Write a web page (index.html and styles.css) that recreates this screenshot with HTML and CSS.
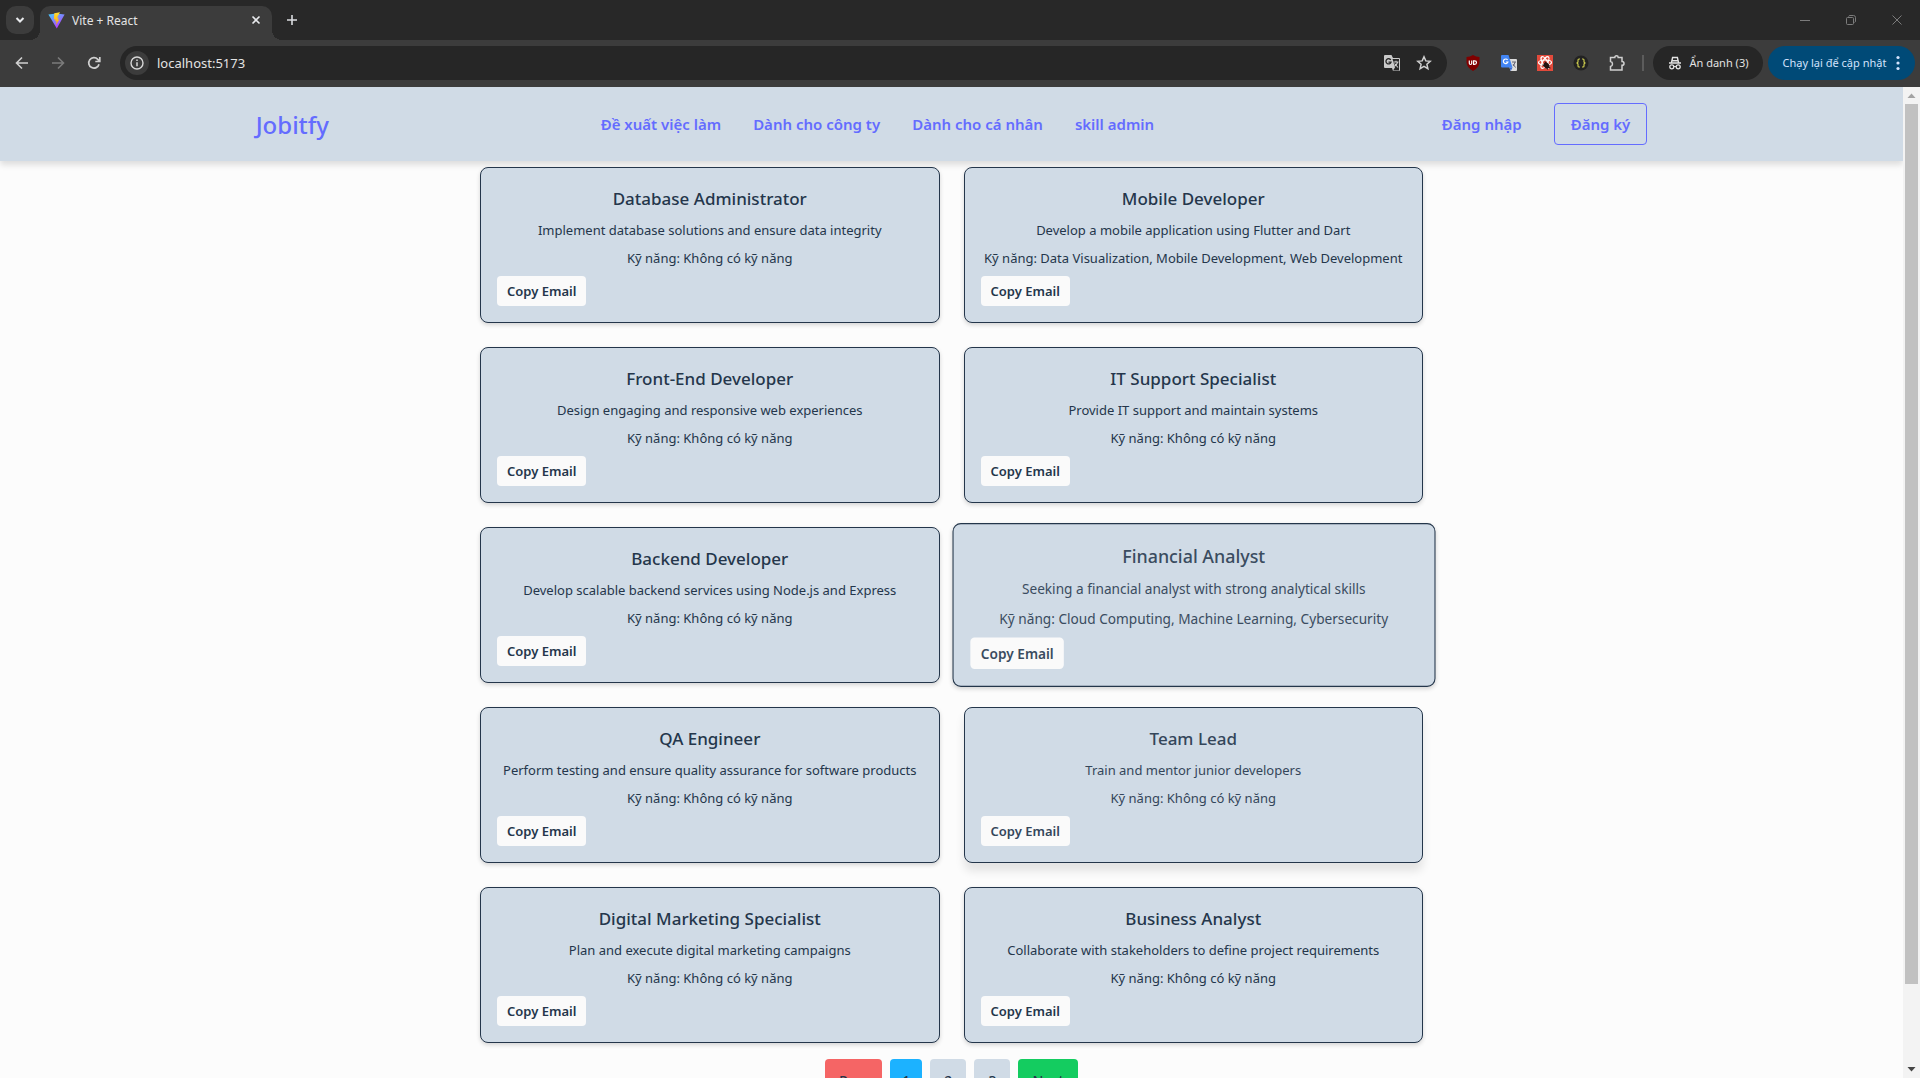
FILE: index.html
```html
<!DOCTYPE html>
<html lang="vi">
<head>
<meta charset="utf-8">
<meta name="viewport" content="width=device-width, initial-scale=1">
<title>Vite + React</title>
<link rel="stylesheet" href="styles.css">
</head>
<body>
<header class="browser">
  <div class="tabstrip">
    <button class="tab-search" type="button" aria-label="Tìm kiếm thẻ">
      <svg width="10" height="10" viewBox="0 0 10 10"><path d="M1.500 3l3.500 3.500L8.500 3" fill="none" stroke="#e8eaed" stroke-width="2"/></svg>
    </button>
    <div class="tab">
      <svg width="17" height="17" viewBox="0 0 17 17">
        <defs>
          <linearGradient id="vite" x1="0" y1="0" x2="0.600" y2="1"><stop offset="0" stop-color="#41d1ff"/><stop offset="1" stop-color="#bd34fe"/></linearGradient>
          <linearGradient id="bolt" x1="0" y1="0" x2="0" y2="1"><stop offset="0" stop-color="#ffdd35"/><stop offset="1" stop-color="#ffa800"/></linearGradient>
        </defs>
        <path d="M.4 2.600 8.500 1.500l8.100 1.100L8.800 16.600z" fill="url(#vite)"/>
        <path d="M12 .2 6.300 1.300 5.900 7.500l1.700-.3-.5 2.300 1.500-.4-.8 3.800 3.600-5.500-1.700.3.900-2.300-1.600.3z" fill="url(#bolt)"/>
      </svg>
      <span class="tab-title">Vite + React</span>
      <button class="plain" type="button" aria-label="Đóng thẻ">
        <svg width="10" height="10" viewBox="0 0 10 10"><path d="M1.500 1.500l7 7M8.500 1.500l-7 7" stroke="#e8eaed" stroke-width="1.600"/></svg>
      </button>
    </div>
    <button class="plain new-tab" type="button" aria-label="Thẻ mới">
      <svg width="12" height="12" viewBox="0 0 12 12"><path d="M6 1v10M1 6h10" stroke="#dadce0" stroke-width="1.600"/></svg>
    </button>
    <div class="window-controls">
      <button class="plain" type="button" aria-label="Thu nhỏ"><svg width="10" height="10" viewBox="0 0 10 10"><path d="M0 5.500h10" stroke="#7c7c7c"/></svg></button>
      <button class="plain" type="button" aria-label="Khôi phục"><svg width="10" height="10" viewBox="0 0 10 10"><path d="M.5 3.500q0-1 1-1h5q1 0 1 1v5q0 1-1 1h-5q-1 0-1-1zM2.500 1.500q.4-1 1.500-1h3.500q2 0 2 2V6q0 1-1 1.500" fill="none" stroke="#7c7c7c"/></svg></button>
      <button class="plain" type="button" aria-label="Đóng"><svg width="10" height="10" viewBox="0 0 10 10"><path d="M.5.5l9 9M9.500.5l-9 9" stroke="#7c7c7c"/></svg></button>
    </div>
  </div>
  <div class="toolbar">
    <div class="nav-buttons">
      <button class="plain" type="button" aria-label="Quay lại"><svg width="14" height="14" viewBox="0 0 14 14"><path d="M13 7H2M7 1.500 1.500 7 7 12.500" fill="none" stroke="#d0d0d0" stroke-width="1.600"/></svg></button>
      <button class="plain" type="button" aria-label="Tiến" disabled><svg width="14" height="14" viewBox="0 0 14 14"><path d="M1 7h11M7 1.500 12.500 7 7 12.500" fill="none" stroke="#7b7b7b" stroke-width="1.600"/></svg></button>
      <button class="plain" type="button" aria-label="Tải lại"><svg width="14" height="14" viewBox="0 0 14 14"><path d="M12 8.200A5.200 5.200 0 1 1 10.800 3.400L12.500 5.100M12.800 1v4.500H8.300" fill="none" stroke="#d0d0d0" stroke-width="1.700"/></svg></button>
    </div>
    <div class="omnibox">
      <button class="site-info" type="button" aria-label="Thông tin trang web"><svg width="14" height="14" viewBox="0 0 14 14"><circle cx="7" cy="7" r="6" fill="none" stroke="#d8d8d8" stroke-width="1.400"/><path d="M7 6.200v4M7 3.600v1.500" stroke="#d8d8d8" stroke-width="1.500"/></svg></button>
      <input class="address" type="text" aria-label="Địa chỉ" value="localhost:5173">
      <button class="plain" type="button" aria-label="Dịch"><svg width="18" height="18" viewBox="0 0 18 18"><path d="M2 1h6.500l1.500 3h6q1 0 1 1v11q0 1-1 1h-6l-1-3H2q-1 0-1-1V2q0-1 1-1z" fill="#c9c9c9"/><path d="M9.500 5H16v11.500h-6l2-3z" fill="#262626"/><path d="M7.800 6A2.600 2.600 0 1 0 8 8.200H5.500" fill="none" stroke="#262626" stroke-width="1.300"/><path d="M10.500 8h5M13 6.800V8M14.700 8q-1 3-3.200 4.300M11.500 9.500l3.500 4" fill="none" stroke="#c9c9c9" stroke-width="1.100"/></svg></button>
      <button class="plain" type="button" aria-label="Đánh dấu trang"><svg width="16" height="16" viewBox="0 0 16 16"><path d="M8 1.800l1.800 4.100 4.400.4-3.300 3 1 4.400L8 11.400l-3.900 2.300 1-4.400-3.300-3 4.400-.4z" fill="none" stroke="#d0d0d0" stroke-width="1.500"/></svg></button>
    </div>
    <div class="extensions">
      <button class="plain" type="button" aria-label="Chặn quảng cáo"><svg width="16" height="16" viewBox="0 0 16 16"><path d="M8 0q3 1.800 6.500 2v5.500Q14 13 8 16 2 13 1.500 7.500V2Q5 1.800 8 0z" fill="#800000"/><path d="M4.300 5.500v2.800q0 1.200 1.200 1.200t1.200-1.200V5.500M8.600 5.800v3.600h1q1.900 0 1.900-1.800t-1.900-1.800z" fill="none" stroke="#fff" stroke-width="1.200"/></svg></button>
      <button class="plain" type="button" aria-label="Google Dịch"><svg width="16" height="16" viewBox="0 0 16 16"><path d="M6 4h9q1 0 1 1v10q0 1-1 1H9.500z" fill="#dcdcdc"/><path d="M1 0h6.500l4 12.500H1q-1 0-1-1V1q0-1 1-1z" fill="#4285f4"/><path d="M8.500 12.500h3L9.800 16z" fill="#3367d6"/><path d="M6.600 5A2.300 2.300 0 1 0 6.900 7H4.800" fill="none" stroke="#fff" stroke-width="1.200"/><path d="M11 7h4M14 7q-.6 3-2 4M12 9l2.500 3.500" fill="none" stroke="#667" stroke-width="1"/></svg></button>
      <button class="plain" type="button" aria-label="React tools"><svg width="16" height="16" viewBox="0 0 16 16"><path fill="#e24a3b" d="M0 0h16v16H0z"/><g fill="none" stroke="#fff" stroke-width="1.200"><ellipse cx="8" cy="7.500" rx="6.500" ry="2.500"/><ellipse cx="8" cy="7.500" rx="6.500" ry="2.500" transform="rotate(60 8 7.500)"/><ellipse cx="8" cy="7.500" rx="6.500" ry="2.500" transform="rotate(120 8 7.500)"/></g><ellipse cx="9.500" cy="10.500" rx="2.600" ry="3.400" fill="#241210" transform="rotate(-40 9.500 10.500)"/><path d="M5.500 10l8 3M8 6.500l2.500 8" stroke="#241210"/></svg></button>
      <button class="plain" type="button" aria-label="JSON"><svg width="16" height="16" viewBox="0 0 16 16"><circle cx="8" cy="8" r="7.500" fill="#222"/><path d="M7 4H6q-1 0-1 1v2l-1 1 1 1v2q0 1 1 1h1M9 4h1q1 0 1 1v2l1 1-1 1v2q0 1-1 1H9" fill="none" stroke="#c9c84c" stroke-width="1.200"/></svg></button>
      <button class="plain" type="button" aria-label="Tiện ích"><svg width="16" height="16" viewBox="0 0 16 16"><path d="M1.500 2.500h4.300q0-1.700 1.700-1.700t1.700 1.700H13v4q2 0 2 1.900t-2 1.900V15H1.500v-3.500q2-.4 2-2.500t-2-2.500z" fill="none" stroke="#d0d0d0" stroke-width="1.500"/></svg></button>
    </div>
    <span class="divider"></span>
    <button class="pill incognito" type="button">
      <svg width="14" height="14" viewBox="0 0 14 14"><path d="M1 7h12M3.500 6.500 4.600 1.500h4.800l1.100 5M4.300 4.800h5.400" fill="none" stroke="#e3e3e3" stroke-width="1.400"/><circle cx="3.800" cy="10.800" r="2" fill="none" stroke="#e3e3e3" stroke-width="1.300"/><circle cx="10.200" cy="10.800" r="2" fill="none" stroke="#e3e3e3" stroke-width="1.300"/><path d="M5.600 10.500h2.800" stroke="#e3e3e3"/></svg>
      <span>Ẩn danh (3)</span>
    </button>
    <button class="pill relaunch" type="button">
      <span>Chạy lại để cập nhật</span>
      <svg width="4" height="16" viewBox="0 0 4 16" fill="#d3e3fd"><circle cx="2" cy="2.500" r="1.600"/><circle cx="2" cy="8" r="1.600"/><circle cx="2" cy="13.500" r="1.600"/></svg>
    </button>
  </div>
</header>

<div class="viewport">
  <div class="page">
    <nav class="navbar">
      <a class="logo" href="#">Jobitfy</a>
      <ul class="links">
        <li><a href="#">Đề xuất việc làm</a></li>
        <li><a href="#">Dành cho công ty</a></li>
        <li><a href="#">Dành cho cá nhân</a></li>
        <li><a href="#">skill admin</a></li>
      </ul>
      <div class="auth">
        <a class="login" href="#">Đăng nhập</a>
        <a class="register" href="#">Đăng ký</a>
      </div>
    </nav>
    <main>
      <section class="jobs">
        <article class="card"><h2>Database Administrator</h2><p>Implement database solutions and ensure data integrity</p><p>Kỹ năng: Không có kỹ năng</p><button type="button">Copy Email</button></article>
        <article class="card"><h2>Mobile Developer</h2><p>Develop a mobile application using Flutter and Dart</p><p>Kỹ năng: Data Visualization, Mobile Development, Web Development</p><button type="button">Copy Email</button></article>
        <article class="card"><h2>Front-End Developer</h2><p>Design engaging and responsive web experiences</p><p>Kỹ năng: Không có kỹ năng</p><button type="button">Copy Email</button></article>
        <article class="card"><h2>IT Support Specialist</h2><p>Provide IT support and maintain systems</p><p>Kỹ năng: Không có kỹ năng</p><button type="button">Copy Email</button></article>
        <article class="card"><h2>Backend Developer</h2><p>Develop scalable backend services using Node.js and Express</p><p>Kỹ năng: Không có kỹ năng</p><button type="button">Copy Email</button></article>
        <article class="card card-hover"><h2>Financial Analyst</h2><p>Seeking a financial analyst with strong analytical skills</p><p>Kỹ năng: Cloud Computing, Machine Learning, Cybersecurity</p><button type="button">Copy Email</button></article>
        <article class="card"><h2>QA Engineer</h2><p>Perform testing and ensure quality assurance for software products</p><p>Kỹ năng: Không có kỹ năng</p><button type="button">Copy Email</button></article>
        <article class="card card-fading"><h2>Team Lead</h2><p>Train and mentor junior developers</p><p>Kỹ năng: Không có kỹ năng</p><button type="button">Copy Email</button></article>
        <article class="card"><h2>Digital Marketing Specialist</h2><p>Plan and execute digital marketing campaigns</p><p>Kỹ năng: Không có kỹ năng</p><button type="button">Copy Email</button></article>
        <article class="card"><h2>Business Analyst</h2><p>Collaborate with stakeholders to define project requirements</p><p>Kỹ năng: Không có kỹ năng</p><button type="button">Copy Email</button></article>
      </section>
      <div class="pagination">
        <button class="prev" type="button">Prev</button>
        <button class="current" type="button">1</button>
        <button type="button">2</button>
        <button type="button">3</button>
        <button class="next" type="button">Next</button>
      </div>
    </main>
  </div>
  <div class="scrollbar">
    <svg class="arrow" width="17" height="17" viewBox="0 0 17 17"><path d="M4.500 11 8.500 6.500l4 4.500z" fill="#a3a3a3"/></svg>
    <div class="track"><div class="thumb"></div></div>
    <svg class="arrow" width="17" height="17" viewBox="0 0 17 17"><path d="M4.500 6 8.500 10.500l4-4.500z" fill="#454545"/></svg>
  </div>
</div>
</body>
</html>
```
FILE: styles.css
```css
:root {
  --surface: #d0dbe6;
  --ink: #24364b;
  --accent: #646cff;
}

* { box-sizing: border-box; }

body {
  margin: 0;
  height: 100vh;
  display: flex;
  flex-direction: column;
  overflow: hidden;
  font-family: "Noto Sans", "Open Sans", sans-serif;
  font-size: 13px;
  color: var(--ink);
  background: #fcfcfc;
}

button, input { font: inherit; color: inherit; }
button { border: 0; cursor: pointer; }
svg { display: block; flex: none; }
a { color: inherit; text-decoration: none; }

/* Browser frame */
.browser { flex: none; background: #3c3c3c; color: #e3e3e3; }

.tabstrip {
  display: flex;
  align-items: flex-start;
  height: 40px;
  padding: 6px 18px 0 6px;
  background: #282828;
}

.tab-search {
  display: grid;
  place-items: center;
  width: 28px;
  height: 28px;
  margin-right: 6px;
  padding: 0;
  border-radius: 10px;
  background: #3c3c3c;
}

.plain {
  display: grid;
  place-items: center;
  padding: 0;
  background: none;
}

.tab {
  position: relative;
  display: flex;
  align-items: center;
  gap: 7px;
  width: 232px;
  height: 34px;
  padding: 0 11px 6px 8px;
  border-radius: 10px 10px 0 0;
  background: #3c3c3c;
}

/* Curved feet that join the tab to the toolbar */
.tab::before,
.tab::after {
  content: "";
  position: absolute;
  bottom: 0;
  width: 10px;
  height: 10px;
}
.tab::before { right: 100%; background: radial-gradient(circle at 0 0, transparent 10px, #3c3c3c 10px); }
.tab::after { left: 100%; background: radial-gradient(circle at 100% 0, transparent 10px, #3c3c3c 10px); }

.tab-title { flex: 1; font-size: 12px; }
.new-tab { margin: 8px 0 0 14px; }
.window-controls { display: flex; gap: 36px; margin: 9px 0 0 auto; }

.toolbar {
  display: flex;
  align-items: center;
  height: 47px;
  padding: 0 5px 2px 15px;
}

.nav-buttons { display: flex; gap: 22px; margin-right: 19px; }

.omnibox {
  flex: 1;
  display: flex;
  align-items: center;
  gap: 15px;
  height: 34px;
  padding: 0 15px 0 5px;
  border-radius: 17px;
  background: #262626;
}

.site-info {
  display: grid;
  place-items: center;
  width: 24px;
  height: 24px;
  padding: 0;
  border-radius: 50%;
  background: #3c3c3c;
}

.address {
  flex: 1;
  min-width: 0;
  margin-left: -7px;
  padding: 0;
  border: 0;
  outline: 0;
  background: none;
}

.extensions { display: flex; gap: 20px; margin-left: 18px; }
.extensions button { width: 16px; }
.divider { width: 2px; height: 16px; margin: 0 9px 0 17px; background: #5c5c5c; }

.pill {
  display: flex;
  align-items: center;
  justify-content: center;
  height: 34px;
  padding: 0;
  border-radius: 17px;
  font-size: 11px;
  white-space: nowrap;
}

.incognito { gap: 8px; width: 110px; margin-right: 5px; background: #262626; }
.relaunch { gap: 10px; width: 147px; background: #004a77; color: #d3e3fd; }

/* Page */
.viewport { flex: 1; display: flex; min-height: 0; }
.page { flex: 1; min-width: 0; overflow: hidden; }

.navbar {
  display: flex;
  align-items: center;
  justify-content: space-evenly;
  height: 74px;
  background: var(--surface);
  color: var(--accent);
  font-size: 15px;
  font-weight: 600;
  box-shadow: 0 4px 6px rgba(0, 0, 0, 0.12);
}

.logo { font-size: 24px; font-weight: 500; }
.links { display: flex; margin: 0; padding: 0; list-style: none; }
.links a { padding: 0 16px; }
.auth { display: flex; align-items: center; gap: 16px; }
.login { padding: 0 16px; }
.register {
  padding: 8px 16px;
  border: 1px solid var(--accent);
  border-radius: 4px;
  line-height: 24px;
}

main { padding-top: 6px; }

.jobs {
  display: grid;
  grid-template-columns: 1fr 1fr;
  gap: 24px;
  max-width: 943px;
  margin: 0 auto;
}

.card {
  display: flex;
  flex-direction: column;
  align-items: center;
  padding: 16px;
  border: 1px solid var(--ink);
  border-radius: 8px;
  background: var(--surface);
  text-align: center;
  box-shadow: 0 2px 4px rgba(0, 0, 0, 0.16);
}

.card h2 { margin: 0 0 6px; font-size: 17px; font-weight: 500; line-height: 30px; }
.card p { margin: 0 0 8px; line-height: 20px; white-space: nowrap; }

.card button {
  align-self: flex-start;
  height: 30px;
  padding: 0 10px;
  border-radius: 4px;
  background: #fafafa;
  font-weight: 600;
}

.card-hover { transform: scale(1.05); color: #3a4c60; }
.card-fading { color: #34465a; box-shadow: 0 8px 10px rgba(0, 0, 0, 0.1); }

.pagination { display: flex; justify-content: center; gap: 8px; margin-top: 16px; }

.pagination button {
  height: 42px;
  padding: 0 14px;
  border-radius: 4px;
  background: var(--surface);
  font-size: 14px;
  font-weight: 500;
}

.pagination .prev { background: #f56565; }
.pagination .current { padding: 0 12px; background: #1cb2ff; }
.pagination .next { background: #14cc60; }

.scrollbar {
  display: flex;
  flex-direction: column;
  width: 17px;
  background: #f3f3f3;
}

.track { flex: 1; padding: 0 2px; }
.thumb { height: 92%; background: #c1c1c1; }
```
